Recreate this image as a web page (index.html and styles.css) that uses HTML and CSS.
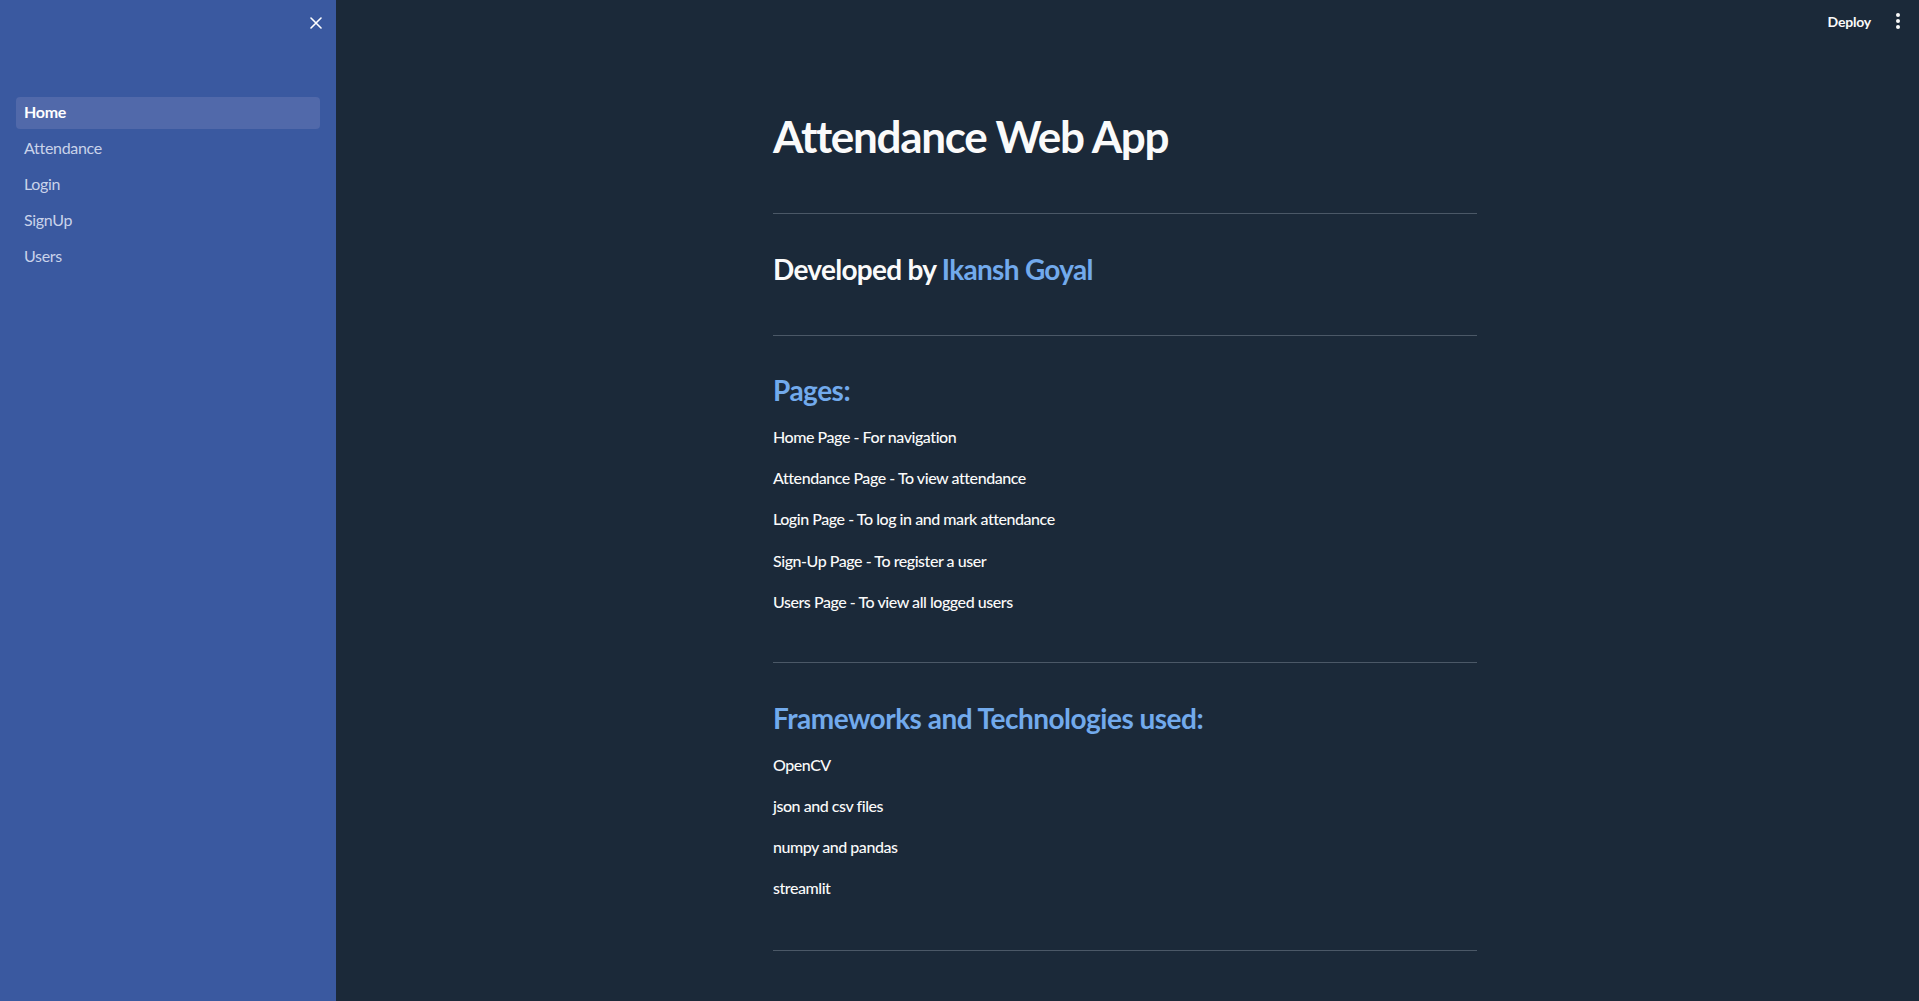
FILE: index.html
```html
<!DOCTYPE html>
<html lang="en">
<head>
<meta charset="utf-8">
<title>Attendance Web App</title>
<link rel="stylesheet" href="styles.css">
</head>
<body>
<div class="app">
  <aside class="sidebar">
    <div class="side-top">
      <button class="close-btn" aria-label="Close sidebar">
        <svg width="12" height="12" viewBox="0 0 12 12"><path d="M1 1 L11 11 M11 1 L1 11" stroke="#ffffff" stroke-width="1.6" stroke-linecap="round"/></svg>
      </button>
    </div>
    <nav class="nav">
      <a class="nav-item active">Home</a>
      <a class="nav-item">Attendance</a>
      <a class="nav-item">Login</a>
      <a class="nav-item">SignUp</a>
      <a class="nav-item">Users</a>
    </nav>
  </aside>
  <main class="main">
    <header class="topbar">
      <span class="deploy">Deploy</span>
      <span class="kebab"><i></i><i></i><i></i></span>
    </header>
    <div class="content">
      <h1 class="title">Attendance Web App</h1>
      <hr class="rule r1">
      <h3 class="h3 dev">Developed by <span class="link">Ikansh Goyal</span></h3>
      <hr class="rule r2">
      <h3 class="h3 blue pages">Pages:</h3>
      <div class="plist">
        <p>Home Page - For navigation</p>
        <p>Attendance Page - To view attendance</p>
        <p>Login Page - To log in and mark attendance</p>
        <p>Sign-Up Page - To register a user</p>
        <p>Users Page - To view all logged users</p>
      </div>
      <hr class="rule r3">
      <h3 class="h3 blue fw">Frameworks and Technologies used:</h3>
      <div class="plist">
        <p>OpenCV</p>
        <p>json and csv files</p>
        <p>numpy and pandas</p>
        <p>streamlit</p>
      </div>
      <hr class="rule r4">
    </div>
  </main>
</div>
</body>
</html>
```

FILE: styles.css
```css
* { box-sizing: border-box; }
html, body { margin: 0; padding: 0; height: 100%; }
body {
  font-family: "Lato", "Open Sans", sans-serif;
  background: #1b2939;
  color: #fafafa;
  overflow: hidden;
}
.app { display: flex; height: 1001px; }
.sidebar {
  width: 336px;
  flex: 0 0 336px;
  background: #3a59a0;
  padding: 0 16px;
}
.side-top {
  height: 97px;
  display: flex;
  justify-content: flex-end;
  align-items: flex-start;
}
.close-btn {
  margin-top: 17px;
  margin-right: -2px;
  width: 12px; height: 12px;
  padding: 0; border: 0; background: none;
  display: flex;
}
.nav { display: flex; flex-direction: column; gap: 4px; }
.nav-item {
  height: 32px;
  padding: 3px 8px 5px;
  line-height: 24px;
  font-size: 16px;
  color: #c9d3ea;
  border-radius: 4px;
  width: 304px;
  letter-spacing: -0.3px;
}
.nav-item.active {
  background: #5169aa;
  color: #ffffff;
  font-weight: 700;
}
.main {
  flex: 1;
  position: relative;
  padding-right: 5px;
}
.topbar {
  position: absolute;
  top: 0; right: 0;
  height: 42px;
  display: flex;
  align-items: center;
  padding-right: 19px;
}
.deploy {
  font-size: 14px;
  font-weight: 700;
  color: #fafafa;
  margin-right: 25px;
  letter-spacing: -0.2px;
}
.kebab { display: flex; flex-direction: column; gap: 2px; }
.kebab i { display: block; width: 4px; height: 4px; border-radius: 50%; background: #fafafa; }
.content {
  width: 704px;
  margin: 0 auto;
  padding-top: 110px;
  display: flex;
  flex-direction: column;
}
.title {
  margin: 0;
  font-size: 44px;
  line-height: 1.2;
  font-weight: 700;
  letter-spacing: -1.3px;
}
.rule {
  width: 100%;
  height: 1px;
  margin: 0;
  border: 0;
  background: #4b5867;
}
.r1 { margin-top: 50px; }
.h3 {
  margin: 0;
  font-size: 28px;
  line-height: 1.2;
  font-weight: 700;
  letter-spacing: -0.5px;
}
.dev { margin-top: 39px; letter-spacing: -0.7px; }
.r2 { margin-top: 49px; }
.pages { margin-top: 38px; }
.blue, .link { color: #72aaec; }
.plist { display: flex; flex-direction: column; gap: 15.6px; margin-top: 16px; }
.plist p { margin: 0; font-size: 16px; line-height: 25.6px; font-weight: 500; letter-spacing: -0.45px; }
.r3 { margin-top: 48px; }
.fw { margin-top: 39px; }
.r4 { margin-top: 49px; }
```
